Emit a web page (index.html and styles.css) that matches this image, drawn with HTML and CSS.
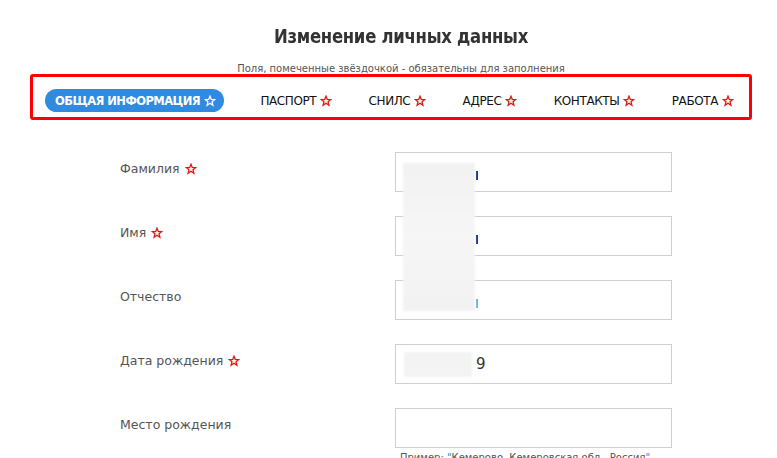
FILE: index.html
```html
<!DOCTYPE html>
<html lang="ru">
<head>
<meta charset="utf-8">
<title>Изменение личных данных</title>
<link rel="stylesheet" href="styles.css">
</head>
<body>
<div class="page">
  <header class="head">
    <h1 class="title">Изменение личных данных</h1>
    <p class="subtitle">Поля, помеченные звёздочкой - обязательны для заполнения</p>
  </header>

  <nav class="tabs">
    <a class="tab tab-active">ОБЩАЯ ИНФОРМАЦИЯ <svg class="star" viewBox="0 0 12 12"><path d="M6 1.2 7.3 4.4 10.7 4.6 8.1 6.8 8.9 10.2 6 8.3 3.1 10.2 3.9 6.8 1.3 4.6 4.7 4.4Z"/></svg></a>
    <a class="tab">ПАСПОРТ <svg class="star" viewBox="0 0 12 12"><path d="M6 1.2 7.3 4.4 10.7 4.6 8.1 6.8 8.9 10.2 6 8.3 3.1 10.2 3.9 6.8 1.3 4.6 4.7 4.4Z"/></svg></a>
    <a class="tab">СНИЛС <svg class="star" viewBox="0 0 12 12"><path d="M6 1.2 7.3 4.4 10.7 4.6 8.1 6.8 8.9 10.2 6 8.3 3.1 10.2 3.9 6.8 1.3 4.6 4.7 4.4Z"/></svg></a>
    <a class="tab">АДРЕС <svg class="star" viewBox="0 0 12 12"><path d="M6 1.2 7.3 4.4 10.7 4.6 8.1 6.8 8.9 10.2 6 8.3 3.1 10.2 3.9 6.8 1.3 4.6 4.7 4.4Z"/></svg></a>
    <a class="tab">КОНТАКТЫ <svg class="star" viewBox="0 0 12 12"><path d="M6 1.2 7.3 4.4 10.7 4.6 8.1 6.8 8.9 10.2 6 8.3 3.1 10.2 3.9 6.8 1.3 4.6 4.7 4.4Z"/></svg></a>
    <a class="tab">РАБОТА <svg class="star" viewBox="0 0 12 12"><path d="M6 1.2 7.3 4.4 10.7 4.6 8.1 6.8 8.9 10.2 6 8.3 3.1 10.2 3.9 6.8 1.3 4.6 4.7 4.4Z"/></svg></a>
  </nav>

  <form class="form">
    <span class="mask-overlay"></span>

    <label class="label">Фамилия <svg class="star" viewBox="0 0 12 12"><path d="M6 1.2 7.3 4.4 10.7 4.6 8.1 6.8 8.9 10.2 6 8.3 3.1 10.2 3.9 6.8 1.3 4.6 4.7 4.4Z"/></svg></label>
    <div class="field"><div class="input"><span class="tail tail-dark"></span></div></div>

    <label class="label">Имя <svg class="star" viewBox="0 0 12 12"><path d="M6 1.2 7.3 4.4 10.7 4.6 8.1 6.8 8.9 10.2 6 8.3 3.1 10.2 3.9 6.8 1.3 4.6 4.7 4.4Z"/></svg></label>
    <div class="field"><div class="input"><span class="tail tail-dark"></span></div></div>

    <label class="label">Отчество</label>
    <div class="field"><div class="input"><span class="tail tail-light"></span></div></div>

    <label class="label">Дата рождения <svg class="star" viewBox="0 0 12 12"><path d="M6 1.2 7.3 4.4 10.7 4.6 8.1 6.8 8.9 10.2 6 8.3 3.1 10.2 3.9 6.8 1.3 4.6 4.7 4.4Z"/></svg></label>
    <div class="field"><div class="input input-date"><span class="masked-date"></span><span class="value">9</span></div></div>

    <label class="label">Место рождения</label>
    <div class="field"><div class="input"></div>
      <p class="hint">Пример: <span class="q">"</span>Кемерово, Кемеровская обл., Россия<span class="q">"</span></p>
    </div>
  </form>
</div>
</body>
</html>
```

FILE: styles.css
```css
* { box-sizing: border-box; }
html, body { margin: 0; padding: 0; background: #fff; }
body { font-family: "DejaVu Sans", Verdana, sans-serif; color: #555; overflow: hidden; }

.page { width: 777px; padding-top: 24px; }

.head { padding-left: 25px; text-align: center; }
.title {
  margin: 0;
  font-size: 20px;
  font-weight: bold;
  font-stretch: condensed;
  color: #333;
  line-height: 24px;
  letter-spacing: -0.3px;
  transform: scaleX(0.915);
}
.subtitle {
  margin: 15px 0 0;
  font-size: 10px;
  line-height: 12px;
  color: #555;
}

.tabs {
  margin: -1px 0 0 30px;
  width: 722px;
  height: 46px;
  border: 3px solid #f00;
  border-radius: 3px;
  display: flex;
  align-items: center;
  justify-content: space-between;
  padding: 7px 15px 0 12px;
}
.tab {
  display: flex;
  align-items: center;
  gap: 4px;
  font-size: 12px;
  color: #111;
  white-space: nowrap;
  letter-spacing: -0.4px;
}
.tab-active {
  background: #2f8ae0;
  color: #fff;
  font-weight: bold;
  font-size: 11.5px;
  height: 23px;
  padding: 0 8px 0 10px;
  border-radius: 12px;
  letter-spacing: -0.55px;
}
.star { width: 12px; height: 12px; flex: none; }
.star path { fill: #fff4d0; stroke: #e0141c; stroke-width: 1.3; stroke-linejoin: miter; }
.tab-active .star path { fill: #2f8ae0; stroke: #fff; }

.form {
  margin: 32px 0 0 120px;
  display: grid;
  grid-template-columns: 275px 277px;
  row-gap: 24px;
  position: relative;
}
.mask-overlay {
  position: absolute;
  left: 283px;
  top: 11px;
  width: 72px;
  height: 148px;
  background: linear-gradient(#f2f2f2, #f6f6f6 50%, #f2f2f2);
  filter: blur(1px);
  z-index: 2;
}
.label {
  font-size: 12.5px;
  color: #555;
  padding-top: 9px;
  display: flex;
  align-items: flex-start;
  gap: 5px;
  line-height: 16px;
}
.label .star { margin-top: 2px; }
.input {
  height: 40px;
  border: 1px solid #cfcfcf;
  display: flex;
  align-items: center;
  padding-left: 80px;
}
.input-date { padding-left: 8px; }
.masked-date {
  width: 68px;
  height: 25px;
  background: #f3f3f3;
  filter: blur(1px);
}
.tail { width: 2px; height: 9px; margin-top: 6px; }
.tail-dark { background: #1b3b8c; }
.tail-light { background: #6fb5ea; }
.value { font-size: 15px; color: #333; margin-left: 4px; }
.hint {
  margin: 4px 0 0 5px;
  font-size: 10px;
  color: #555;
  white-space: nowrap;
}
.hint .q { color: #2f8ae0; }
```
